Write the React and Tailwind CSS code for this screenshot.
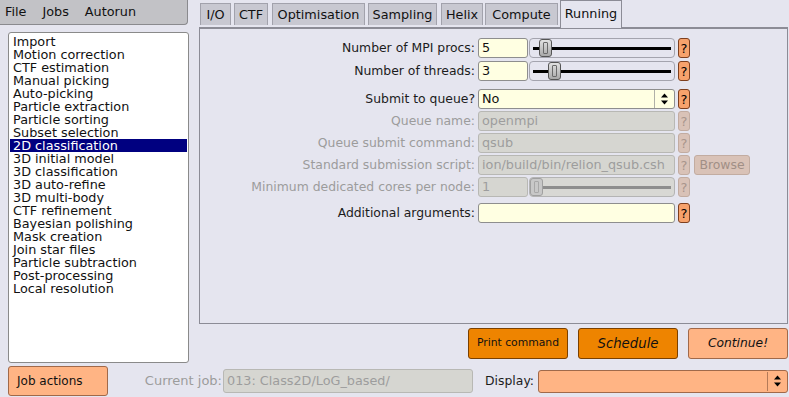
import React from 'react'

const JOBS = [
  'Import', 'Motion correction', 'CTF estimation', 'Manual picking', 'Auto-picking',
  'Particle extraction', 'Particle sorting', 'Subset selection', '2D classification',
  '3D initial model', '3D classification', '3D auto-refine', '3D multi-body',
  'CTF refinement', 'Bayesian polishing', 'Mask creation', 'Join star files',
  'Particle subtraction', 'Post-processing', 'Local resolution'
]

const TABS = [
  { label: 'I/O', w: 'w-[31px]', ml: 'ml-[1px]' },
  { label: 'CTF', w: 'w-[34px]', ml: 'ml-[3px]' },
  { label: 'Optimisation', w: 'w-[93px]', ml: 'ml-[4px]' },
  { label: 'Sampling', w: 'w-[69px]', ml: 'ml-[3px]' },
  { label: 'Helix', w: 'w-[42px]', ml: 'ml-[4px]' },
  { label: 'Compute', w: 'w-[73px]', ml: 'ml-[2px]' }
]

function Help({ disabled }) {
  return (
    <div className={`ml-[3px] w-[12px] h-[20px] rounded-[3px] border flex items-center justify-center text-[13px] leading-none ${disabled ? 'bg-[#d9c2b7] border-[#c2aca1] text-[#a8958c]' : 'bg-[#f6a26c] border-[#7d3f1e] text-black'}`}>
      ?
    </div>
  )
}

function Arrows({ color = '#000' }) {
  return (
    <svg width="9" height="12" viewBox="0 0 9 12">
      <path d="M4.5 0.5 L8 4.5 H1 Z" fill={color} />
      <path d="M4.5 11.5 L8 7.5 H1 Z" fill={color} />
    </svg>
  )
}

function Slider({ pos, disabled }) {
  return (
    <div className={`relative ml-[1px] w-[146px] h-[20px] rounded-[4px] border flex items-center px-[3px] ${disabled ? 'border-[#b4b4b4] bg-[#d8d8d4]' : 'border-[#a4a4ae]'}`}>
      <div className={`w-full h-[3px] ${disabled ? 'bg-[#8e8e8e]' : 'bg-black'}`} />
      <div
        className={`absolute top-[0px] w-[13px] h-[18px] rounded-[3px] border flex items-center justify-center ${disabled ? 'border-[#a0a0a0] bg-[#c8c8c8]' : 'border-[#555] bg-gradient-to-b from-[#e2e2e2] to-[#a9a9a9]'}`}
        style={{ left: pos }}
      >
        <div className={`w-[5px] h-[12px] rounded-[1px] border ${disabled ? 'border-[#a8a8a8]' : 'border-[#6a6a6a]'}`} />
      </div>
    </div>
  )
}

function Label({ children, disabled }) {
  return (
    <div className="w-[275px] flex justify-end">
      <span className={`whitespace-nowrap text-[12.4px] ${disabled ? 'text-[#9c9c9c]' : 'text-[#1c1c1c]'}`}>{children}</span>
    </div>
  )
}

function Input({ value, w, disabled }) {
  return (
    <div className={`ml-[3px] ${w} h-[20px] rounded-[3px] border flex items-center pl-[3px] overflow-hidden whitespace-nowrap text-[12.8px] ${disabled ? 'bg-[#d6d6d1] border-[#b8b8b4] text-[#9d9d9d]' : 'bg-[#ffffe2] border-[#8e8e8e] text-[#111]'}`}>
      {value}
    </div>
  )
}

export default function App() {
  return (
    <div className="w-[789px] h-[397px] overflow-hidden bg-[#e5e5ef] font-['DejaVu_Sans',sans-serif] flex flex-col">
      <div className="flex h-[365px]">
        {/* left: menu + job list */}
        <div className="w-[199px] flex flex-col">
          <div className="w-[188px] h-[25px] bg-[#c2c2c6] border-r border-b border-[#8a8a8e] rounded-br-[4px] flex items-center px-[5px] gap-[16px] text-[12.8px] text-[#111]">
            <span>File</span>
            <span>Jobs</span>
            <span>Autorun</span>
          </div>
          <div className="ml-[8px] mt-[7px] w-[181px] h-[331px] bg-white border border-[#8a8a8a] rounded-[3px] p-[1px] pt-[2px]">
            {JOBS.map(j => (
              <div key={j} className={`h-[13px] leading-[13px] px-[3px] text-[12.8px] whitespace-nowrap ${j === '2D classification' ? 'bg-[#000080] text-white' : 'text-[#111]'}`}>
                {j}
              </div>
            ))}
          </div>
        </div>

        {/* right: tabs + panel + buttons */}
        <div className="flex-1 flex flex-col">
          <div className="flex items-end h-[28px] relative z-10">
            {TABS.map(t => (
              <div key={t.label} className={`${t.ml} ${t.w} h-[22px] mb-[3px] bg-[#c8c8d1] border border-[#a2a2ac] border-b-0 flex items-center justify-center text-[12.8px] text-[#111]`}>
                {t.label}
              </div>
            ))}
            <div className="ml-[2px] w-[62px] h-[28px] bg-[#e5e5ef] border-l border-t border-r border-[#8c8c96] flex items-start justify-center pt-[3px] text-[12.8px] text-[#111]">
              Running
            </div>
          </div>
          <div className="-mt-[1px] w-[589px] h-[297px] border border-[#8c8c96] border-t-2 overflow-hidden flex flex-col pt-[9px]">
            <div className="flex items-center h-[20px]">
              <Label>Number of MPI procs:</Label>
              <Input value="5" w="w-[50px]" />
              <Slider pos={9} />
              <Help />
            </div>
            <div className="flex items-center h-[20px] mt-[3px]">
              <Label>Number of threads:</Label>
              <Input value="3" w="w-[50px]" />
              <Slider pos={18} />
              <Help />
            </div>
            <div className="flex items-center h-[20px] mt-[8px]">
              <Label>Submit to queue?</Label>
              <div className="ml-[3px] w-[197px] h-[20px] rounded-[3px] border border-[#8e8e8e] bg-[#ffffe2] flex items-center text-[12.8px] text-[#111]">
                <span className="flex-1 pl-[3px]">No</span>
                <div className="w-[20px] h-full border-l border-[#b0b0a8] flex items-center justify-center">
                  <Arrows />
                </div>
              </div>
              <Help />
            </div>
            <div className="flex items-center h-[20px] mt-[2px]">
              <Label disabled>Queue name:</Label>
              <Input value="openmpi" w="w-[197px]" disabled />
              <Help disabled />
            </div>
            <div className="flex items-center h-[20px] mt-[2px]">
              <Label disabled>Queue submit command:</Label>
              <Input value="qsub" w="w-[197px]" disabled />
              <Help disabled />
            </div>
            <div className="flex items-center h-[20px] mt-[2px]">
              <Label disabled>Standard submission script:</Label>
              <Input value="ion/build/bin/relion_qsub.csh" w="w-[197px]" disabled />
              <Help disabled />
              <div className="ml-[4px] w-[56px] h-[20px] rounded-[3px] border border-[#c2aca1] bg-[#d9c2b7] flex items-center justify-center text-[12.4px] text-[#a18f86]">
                Browse
              </div>
            </div>
            <div className="flex items-center h-[20px] mt-[2px]">
              <Label disabled>Minimum dedicated cores per node:</Label>
              <Input value="1" w="w-[50px]" disabled />
              <Slider pos={0} disabled />
              <Help disabled />
            </div>
            <div className="flex items-center h-[20px] mt-[6px]">
              <Label>Additional arguments:</Label>
              <Input value="" w="w-[197px]" />
              <Help />
            </div>
          </div>
          <div className="flex justify-end gap-[10px] pr-[1px] mt-[4px]">
            <div className="w-[100px] h-[31px] rounded-[3px] border border-[#7a4000] bg-[#ee8400] flex items-center justify-center text-[10.8px] text-[#111]">
              Print command
            </div>
            <div className="w-[100px] h-[31px] rounded-[3px] border border-[#7a4000] bg-[#ee8400] flex items-center justify-center text-[13.3px] italic text-[#111]">
              Schedule
            </div>
            <div className="w-[100px] h-[31px] rounded-[3px] border border-[#a0694a] bg-[#ffb484] flex items-center justify-center text-[12.3px] italic text-[#111]">
              Continue!
            </div>
          </div>
        </div>
      </div>

      {/* bottom row */}
      <div className="flex items-center h-[32px]">
        <div className="ml-[8px] w-[100px] h-[30px] rounded-[3px] border border-[#a0694a] bg-[#ffb484] flex items-center pl-[8px] text-[12px] text-[#111]">
          Job actions
        </div>
        <div className="w-[114px] flex justify-end">
          <span className="text-[13px] text-[#9c9c9c] whitespace-nowrap">Current job:</span>
        </div>
        <div className="ml-[1px] w-[250px] h-[24px] rounded-[3px] border border-[#b8b8b4] bg-[#d6d6d1] flex items-center pl-[3px] text-[12.8px] text-[#9d9d9d] whitespace-nowrap overflow-hidden">
          013: Class2D/LoG_based/
        </div>
        <div className="w-[61px] flex justify-end">
          <span className="text-[12.4px] text-[#1c1c1c]">Display:</span>
        </div>
        <div className="ml-[4px] w-[250px] h-[23px] rounded-[3px] border border-[#a0694a] bg-[#ffb484] flex items-center justify-end">
          <div className="w-[20px] h-[19px] border-l border-[#b47a58] flex items-center justify-center">
            <Arrows />
          </div>
        </div>
      </div>
    </div>
  )
}
